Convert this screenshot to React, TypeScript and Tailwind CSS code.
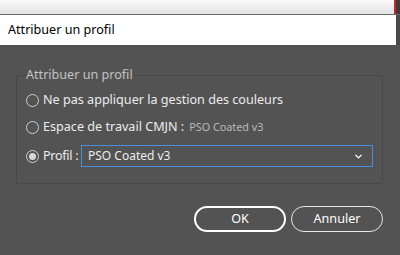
import { ChevronDown } from 'lucide-react';

function Radio({ checked }: { checked?: boolean }) {
    return (
        <span className="w-[13px] h-[13px] rounded-full border border-[#d0d0d0] flex items-center justify-center shrink-0">
            {checked && <span className="w-[7px] h-[7px] rounded-full bg-[#d8d8d8]" />}
        </span>
    );
}

export default function App() {
    return (
        <div className="w-[400px] h-[255px] flex flex-col bg-[#535353] overflow-hidden font-['Segoe_UI','Noto_Sans',sans-serif] text-[12px]">
            {/* window chrome above */}
            <div className="h-[14px] flex shrink-0">
                <div className="flex-1 bg-gradient-to-b from-[#fafafa] to-[#e2e2e2]" />
                <div className="w-[2px] bg-[#c62828]" />
                <div className="w-[4px] bg-[#3c3c3c]" />
            </div>
            <div className="h-[1px] bg-[#6b6b6b] shrink-0" />

            {/* title bar */}
            <div className="h-[30px] flex shrink-0">
                <div className="flex-1 bg-white flex items-center pl-[8px] text-[12.6px] text-black">Attribuer un profil</div>
                <div className="w-[4px] bg-[#4a4a4a]" />
            </div>

            {/* body */}
            <div className="flex-1 flex flex-col px-[16px] pr-[17px] pt-[22px]">
                <fieldset className="border border-[#474747] rounded-[2px] pl-[9px] pr-[9px] pb-[13px] pt-[9px] h-[117px]">
                    <legend className="px-[1px] ml-[-1px] text-[#c4c4c4] text-[12.6px] leading-[16px]">Attribuer un profil</legend>
                    <div className="flex flex-col gap-[10px] text-[#ececec] text-[12.6px]">
                        <label className="flex items-center gap-[4px] h-[17px]">
                            <Radio />
                            <span>Ne pas appliquer la gestion des couleurs</span>
                        </label>
                        <label className="flex items-center gap-[4px] h-[17px]">
                            <Radio />
                            <span>Espace de travail CMJN :</span>
                            <span className="text-[#b9b9b9] text-[10.8px] ml-[1px]">PSO Coated v3</span>
                        </label>
                        <label className="flex items-center gap-[4px] h-[22px] mt-[-1px]">
                            <Radio checked />
                            <span className="w-[34px] whitespace-nowrap tracking-[-0.3px]">Profil :</span>
                            <div className="flex-1 h-[22px] border border-[#4a90d9] flex items-center justify-between pl-[6px] pr-[8px]">
                                <span className="text-[12px]">PSO Coated v3</span>
                                <ChevronDown className="w-[11px] h-[11px] text-white" strokeWidth={3} />
                            </div>
                        </label>
                    </div>
                </fieldset>

                <div className="flex justify-end gap-[5px] mt-[22px]">
                    <button className="w-[92px] h-[26px] rounded-full border-2 border-white text-white text-[12.6px]">OK</button>
                    <button className="w-[92px] h-[26px] rounded-full border-[1.5px] border-[#e8e8e8] text-white text-[12.6px]">Annuler</button>
                </div>
            </div>
        </div>
    );
}
